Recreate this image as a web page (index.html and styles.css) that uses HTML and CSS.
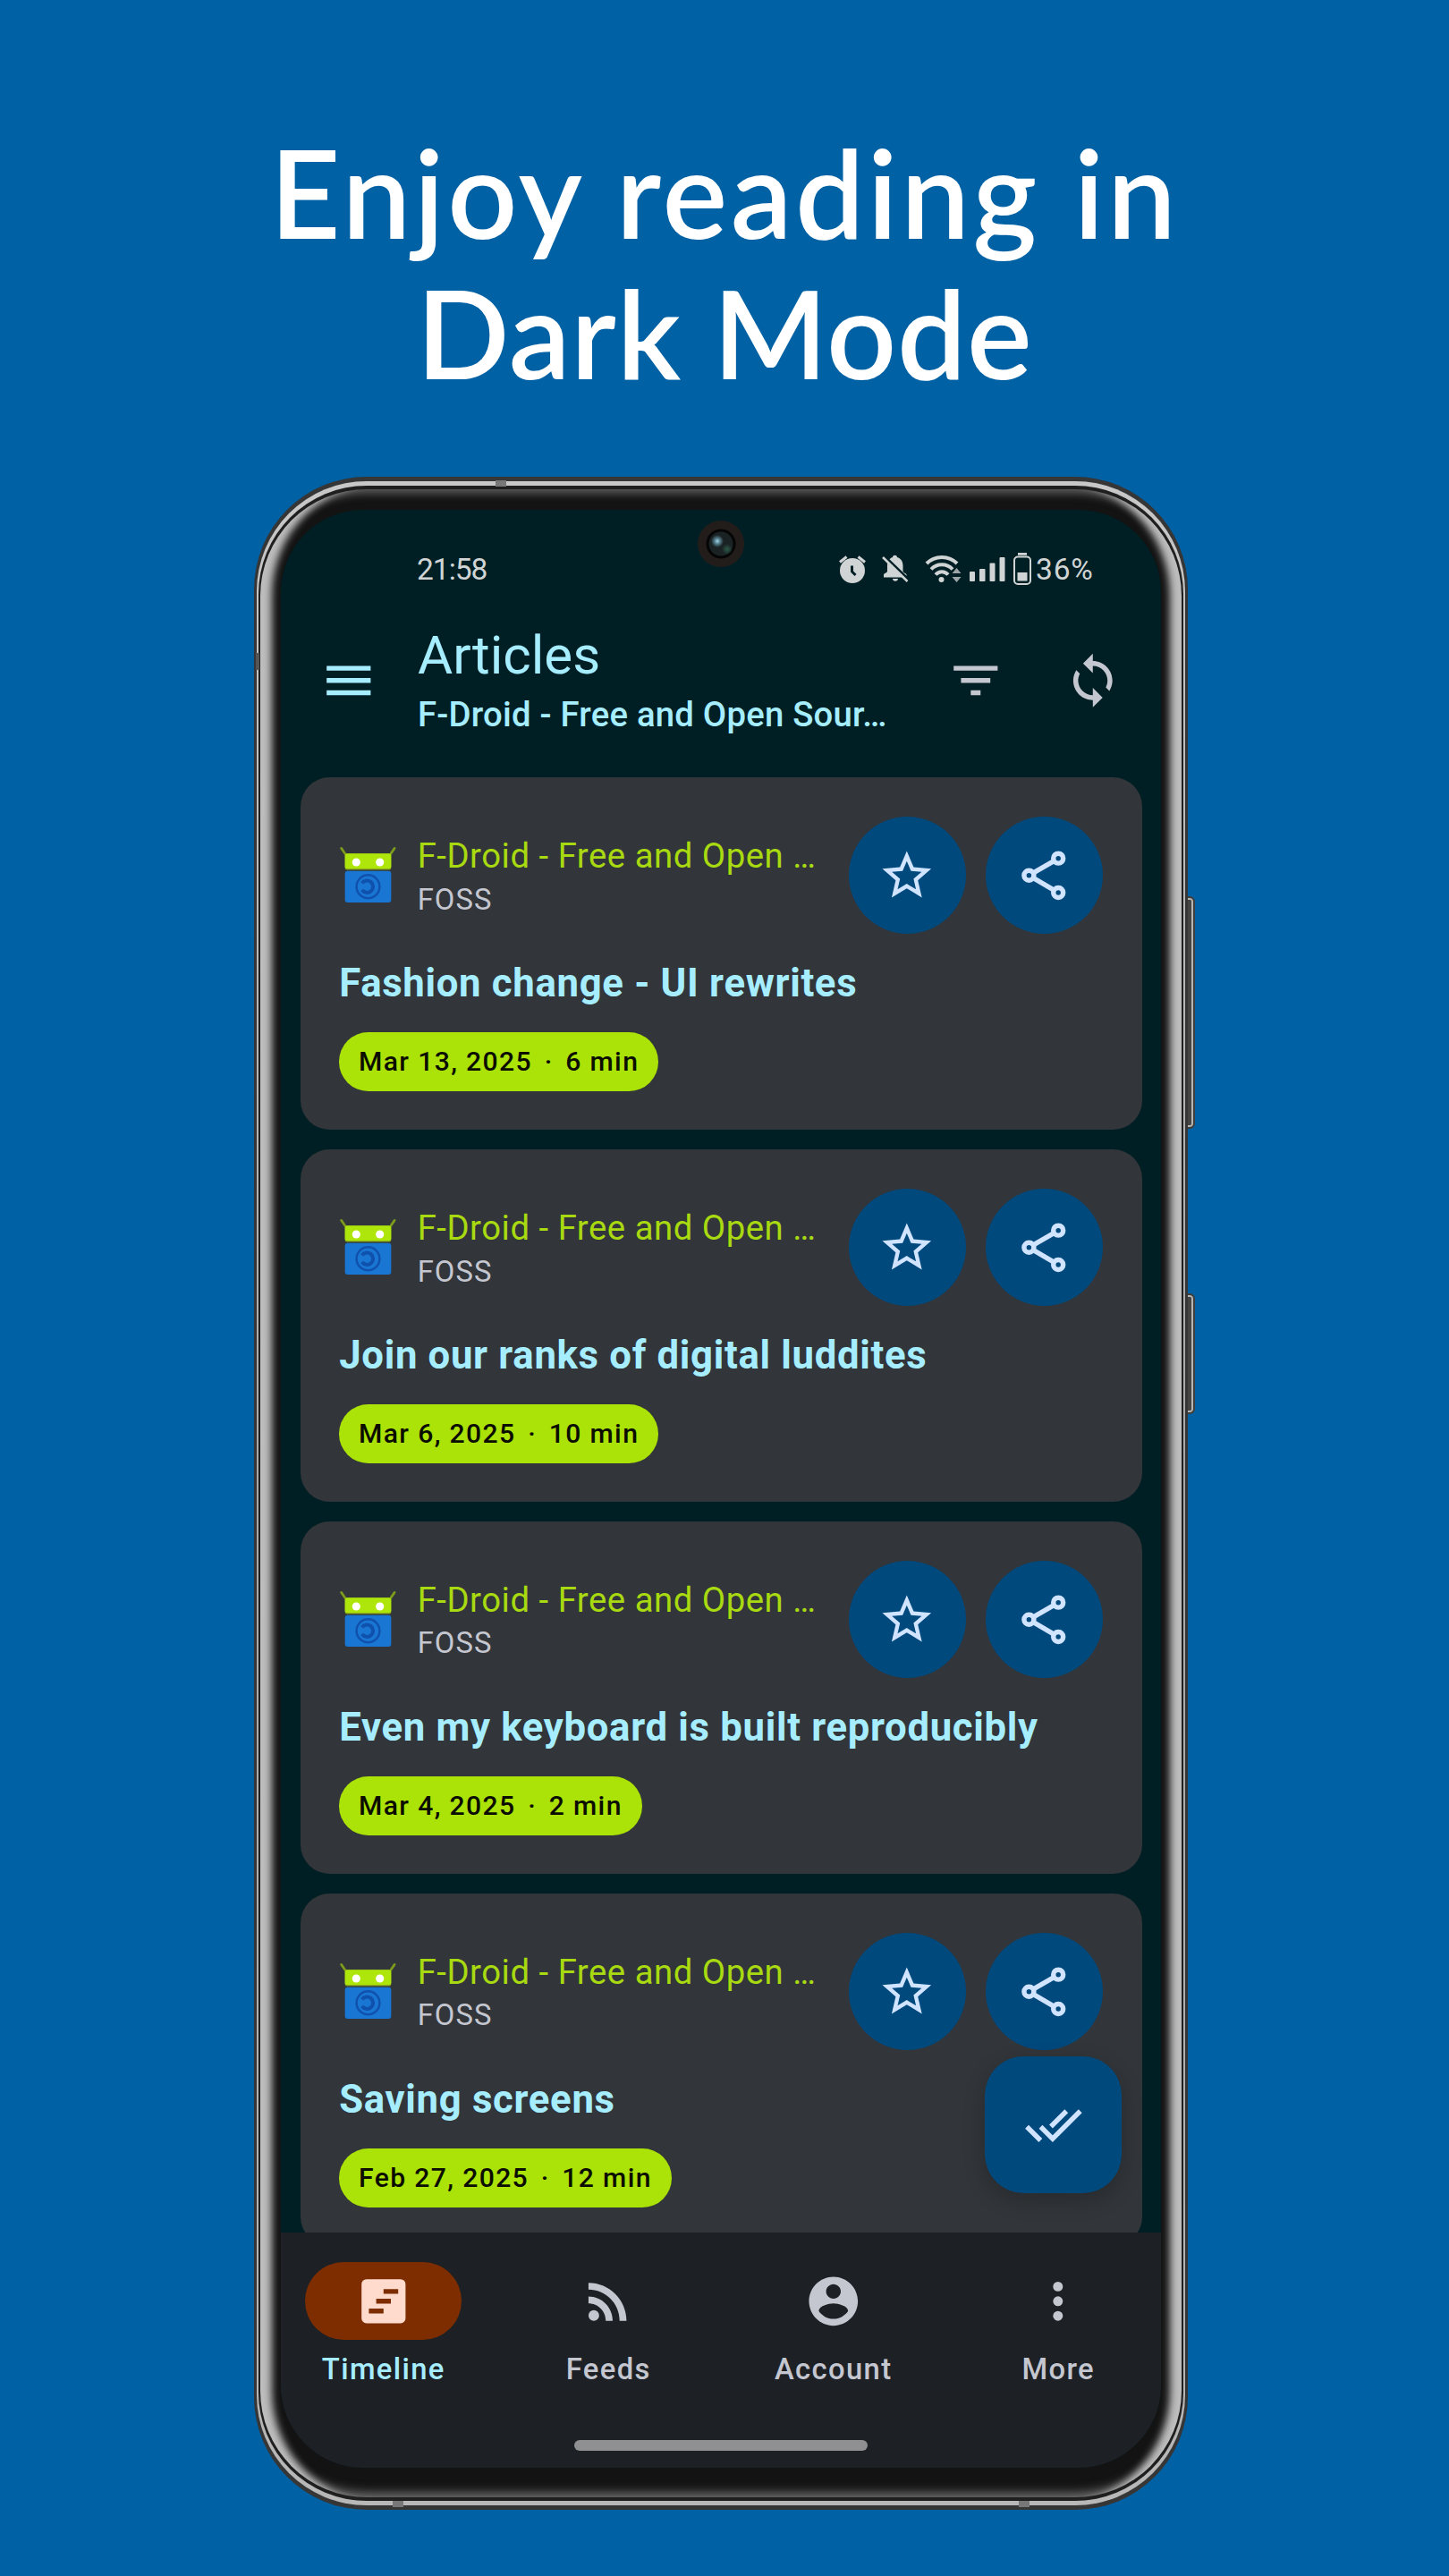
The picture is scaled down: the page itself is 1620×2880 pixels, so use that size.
FILE: index.html
```html
<!DOCTYPE html>
<html lang="en">
<head>
<meta charset="utf-8">
<title>Dark Mode</title>
<link rel="stylesheet" href="styles.css">
</head>
<body>
<svg width="0" height="0" class="defs">
  <symbol id="star" viewBox="0 0 24 24"><path d="M22 9.24l-7.19-.62L12 2 9.19 8.63 2 9.24l5.46 4.73L5.82 21 12 17.27 18.18 21l-1.63-7.03L22 9.24zM12 15.4l-3.76 2.27 1-4.28-3.32-2.88 4.38-.38L12 6.1l1.71 4.04 4.38.38-3.32 2.88 1 4.28L12 15.4z"/></symbol>
  <symbol id="share" viewBox="0 0 24 24"><g fill="none" stroke="currentColor" stroke-width="2"><circle cx="18" cy="5" r="2"/><circle cx="6" cy="12" r="2"/><circle cx="18" cy="19" r="2"/><path d="M7.8 10.95 16.2 6.05M7.8 13.05l8.4 4.9"/></g></symbol>
  <symbol id="fdroid" viewBox="0 0 24 24">
    <path d="M.6.7 2.5 3.4M22.700.7 20.800 3.400" stroke="#7d9b1c" stroke-width="1" stroke-linecap="round" fill="none"/>
    <rect x="2.100" y="2.900" width="19.200" height="6.800" rx="1" fill="#7d9b1c"/>
    <rect x="2.100" y="2.900" width="19.200" height="6.300" rx="1" fill="#aee60c"/>
    <circle cx="6.800" cy="6.500" r="1.700" fill="#fff"/><circle cx="16.600" cy="6.500" r="1.700" fill="#fff"/>
    <rect x="2.100" y="10.100" width="19.200" height="13.100" rx="1.100" fill="#1976d2"/>
    <circle cx="11.700" cy="16.600" r="4.800" fill="none" stroke="#0f51ad" stroke-width=".9"/>
    <path d="M9.200 15.200a2.500 2.500 0 1 1 0 2.800" fill="none" stroke="#0f51ad" stroke-width="1.500"/>
  </symbol>
</svg>
<main class="poster">
  <h1 class="headline"><span class="line-one">Enjoy reading in</span><span class="line-two">Dark Mode</span></h1>
  <div class="phone">
    <i class="side-key volume"></i><i class="side-key power"></i>
    <div class="rim"><div class="groove"><div class="bezel">
      <div class="screen">
        <i class="camera"></i>
        <div class="status">
          <span class="clock">21:58</span>
          <svg class="status-icons" viewBox="938 615 216 40" width="216" height="40" fill="#d0d4d4">
            <circle cx="953" cy="637" r="14"/><path d="M939 627.500l7.500-6M967 627.500l-7.500-6" stroke="#d0d4d4" stroke-width="3"/><path d="M952.500 631.500v6.500l4 4" stroke="#001f24" stroke-width="3" fill="none"/>
            <path d="M988 644.500v-3c0-1.500 4-2 4-4v-6c0-5 2.500-8.500 6-9.500 0-3 5-3 5 0 4 1 6.500 4.500 6.500 9.500v6c0 2 4 2.500 4 4v3zM998 646h6c0 3.500-6 3.500-6 0z"/><path d="M988.500 620.500 1017 648" stroke="#001f24" stroke-width="3"/><path d="M987 622l27.500 27" stroke="#d0d4d4" stroke-width="2.500"/>
            <g fill="none" stroke="#d0d4d4" stroke-width="4"><path d="M1036 629c9-9.500 25-9.500 34 0"/><path d="M1041 635.500c6.500-7 17.500-7 24 0"/><path d="M1046 641.500c4-4.500 10-4.500 14 0"/></g><circle cx="1052.500" cy="647" r="3"/><path d="M1064.500 640l5-6 5 6zM1064.500 644l5 6 5-6z" opacity=".75"/>
            <rect x="1084" y="638" width="6" height="11" rx="1"/><rect x="1095" y="635" width="6.500" height="14" rx="1"/><rect x="1106.500" y="628.500" width="6" height="20.500" rx="1"/><rect x="1117.500" y="622" width="6" height="27" rx="1"/>
            <rect x="1138" y="617" width="10" height="2.800"/><rect x="1134" y="621.500" width="18" height="30.500" rx="4" fill="none" stroke="#d0d4d4" stroke-width="2"/><rect x="1137.500" y="639" width="11" height="9.500"/>
          </svg>
          <span class="battery-level">36%</span>
        </div>
        <header class="appbar">
          <button class="icon-button menu"><svg class="icon" viewBox="0 0 24 24"><path d="M3 18h18v-2H3v2zm0-5h18v-2H3v2zm0-7v2h18V6H3z"/></svg></button>
          <div class="titles"><h2>Articles</h2><p>F-Droid - Free and Open Sour…</p></div>
          <button class="icon-button"><svg class="icon" viewBox="0 0 24 24"><path d="M10 18h4v-2h-4v2zM3 6v2h18V6H3zm3 7h12v-2H6v2z"/></svg></button>
          <button class="icon-button"><svg class="icon" viewBox="0 0 24 24"><path d="M12 4V1L8 5l4 4V6c3.310 0 6 2.690 6 6 0 1.010-.25 1.970-.7 2.800l1.460 1.460C19.540 15.030 20 13.570 20 12c0-4.420-3.580-8-8-8zm0 14c-3.310 0-6-2.690-6-6 0-1.010.25-1.970.7-2.800L5.240 7.740C4.460 8.970 4 10.430 4 12c0 4.420 3.580 8 8 8v3l4-4-4-4v3z"/></svg></button>
        </header>
        <section class="feed">
          <article class="card">
            <div class="card-head"><svg class="favicon"><use href="#fdroid"/></svg><div class="source"><p class="name">F-Droid - Free and Open …</p><p class="category">FOSS</p></div><button class="round"><svg class="icon"><use href="#star"/></svg></button><button class="round"><svg class="icon"><use href="#share"/></svg></button></div>
            <h3>Fashion change - UI rewrites</h3><span class="chip">Mar 13, 2025 <b>·</b> 6 min</span>
          </article>
          <article class="card">
            <div class="card-head"><svg class="favicon"><use href="#fdroid"/></svg><div class="source"><p class="name">F-Droid - Free and Open …</p><p class="category">FOSS</p></div><button class="round"><svg class="icon"><use href="#star"/></svg></button><button class="round"><svg class="icon"><use href="#share"/></svg></button></div>
            <h3>Join our ranks of digital luddites</h3><span class="chip">Mar 6, 2025 <b>·</b> 10 min</span>
          </article>
          <article class="card">
            <div class="card-head"><svg class="favicon"><use href="#fdroid"/></svg><div class="source"><p class="name">F-Droid - Free and Open …</p><p class="category">FOSS</p></div><button class="round"><svg class="icon"><use href="#star"/></svg></button><button class="round"><svg class="icon"><use href="#share"/></svg></button></div>
            <h3>Even my keyboard is built reproducibly</h3><span class="chip">Mar 4, 2025 <b>·</b> 2 min</span>
          </article>
          <article class="card">
            <div class="card-head"><svg class="favicon"><use href="#fdroid"/></svg><div class="source"><p class="name">F-Droid - Free and Open …</p><p class="category">FOSS</p></div><button class="round"><svg class="icon"><use href="#star"/></svg></button><button class="round"><svg class="icon"><use href="#share"/></svg></button></div>
            <h3>Saving screens</h3><span class="chip">Feb 27, 2025 <b>·</b> 12 min</span>
          </article>
          <button class="fab"><svg class="icon" viewBox="0 0 24 24"><path d="M18 7l-1.410-1.410-6.340 6.340 1.410 1.410L18 7zm4.240-1.410L11.660 16.170 7.480 12l-1.410 1.410L11.660 19l12-12-1.420-1.410zM.41 13.410L6 19l1.410-1.410L1.830 12 .41 13.410z"/></svg></button>
        </section>
        <nav class="nav">
          <div class="tabs">
            <a class="tab active"><span class="tab-icon"><svg class="icon" viewBox="0 0 24 24"><path fill-rule="evenodd" d="M5 3h14a2 2 0 0 1 2 2v14a2 2 0 0 1-2 2H5a2 2 0 0 1-2-2V5a2 2 0 0 1 2-2zm7 4v2h6V7zm-3 4v2h6v-2zm-3 4v2h6v-2z"/></svg></span>Timeline</a>
            <a class="tab"><span class="tab-icon"><svg class="icon" viewBox="0 0 24 24"><circle cx="6.180" cy="17.820" r="2.180"/><path d="M4 4.440v2.830c7.030 0 12.730 5.700 12.730 12.730h2.830c0-8.590-6.970-15.560-15.560-15.560zm0 5.660v2.830c3.900 0 7.070 3.170 7.070 7.070h2.830c0-5.470-4.430-9.900-9.900-9.900z"/></svg></span>Feeds</a>
            <a class="tab"><span class="tab-icon"><svg class="icon" viewBox="0 0 24 24"><path d="M12 2C6.480 2 2 6.480 2 12s4.480 10 10 10 10-4.480 10-10S17.520 2 12 2zm0 3c1.660 0 3 1.340 3 3s-1.340 3-3 3-3-1.340-3-3 1.340-3 3-3zm0 14.200c-2.500 0-4.710-1.280-6-3.220.03-1.990 4-3.080 6-3.080 1.990 0 5.970 1.090 6 3.080-1.290 1.940-3.500 3.220-6 3.220z"/></svg></span>Account</a>
            <a class="tab"><span class="tab-icon"><svg class="icon" viewBox="0 0 24 24"><circle cx="12" cy="6" r="2"/><circle cx="12" cy="12" r="2"/><circle cx="12" cy="18" r="2"/></svg></span>More</a>
          </div>
          <i class="gesture"></i>
        </nav>
      </div>
    </div></div></div>
    <i class="band b1"></i><i class="band b2"></i><i class="band b3"></i><i class="band b4"></i>
  </div>
</main>
</body>
</html>
```
FILE: styles.css
```css
* { box-sizing: border-box; margin: 0; padding: 0; }
body { background: #0061a4; font-family: Roboto, "Liberation Sans", sans-serif; }
button { border: 0; background: none; color: inherit; font: inherit; }
i { display: block; }
.defs { position: absolute; }
.poster { width: 1620px; height: 2880px; overflow: hidden; padding-top: 136px; }

.headline { height: 397px; color: #fff; font: 600 137px/157px Lato, sans-serif; text-align: center; }
.headline span { display: block; white-space: nowrap; }
.line-one { letter-spacing: 3.500px; }
.line-two { letter-spacing: .8px; }

.phone { position: relative; width: 1044px; height: 2273px; margin-left: 284px; padding: 5px 3px; border-radius: 126px; background: #363636; }
.rim { height: 100%; padding: 5px 2px; border-radius: 123px; background: linear-gradient(#c8c8c8, #a8a8a8 50%, #b8b8b8); }
.groove { height: 100%; padding: 4px 2px; border-radius: 121px; background: #1f1f1f; }
.bezel { height: 100%; padding: 23px 23px 33px; border-radius: 119px; background: #131313; box-shadow: inset 23px 0 9px -10px #bdbdbd, inset -23px 0 9px -10px #bdbdbd, inset 0 15px 10px -10px #5a5a5a, inset 0 -15px 12px -10px #707070; }
.side-key { position: absolute; left: 1044px; width: 8px; border: 2px solid #403e3b; border-left: 0; border-radius: 0 6px 6px 0; background: #454442; box-shadow: inset -2px 0 #b5b5b3, inset 0 2px #b5b5b3, inset 0 -2px #b5b5b3; }
.volume { top: 469px; height: 260px; }
.power { top: 913px; height: 135px; }
.band { position: absolute; background: #777; }
.b1 { left: 270px; top: 4px; width: 12px; height: 7px; }
.b2 { left: 155px; bottom: 3px; width: 12px; height: 7px; }
.b3 { right: 177px; bottom: 3px; width: 12px; height: 7px; }
.b4 { left: 2px; top: 197px; width: 4px; height: 19px; background: #555; }

.screen { position: relative; display: flex; flex-direction: column; width: 984px; height: 2189px; overflow: hidden; border-radius: 92px; background: #001f24; }
.camera { position: absolute; left: 466px; top: 12px; width: 52px; height: 52px; border-radius: 50%; background: radial-gradient(circle at 22px 23px, #a5d5e8 0, #55808f 3px, transparent 7px), radial-gradient(circle at 33px 32px, #2c5a48 0, transparent 6px), radial-gradient(circle at 50% 50%, #1a2224 0 13px, #050505 14px 16px, #221d1b 17px); }

.status { display: flex; align-items: center; height: 102.500px; padding: 31px 0 0 152px; color: #d0d4d4; font-size: 33.500px; line-height: 40px; }
.status-icons { margin: -2px 0 0 auto; }
.clock { letter-spacing: -1px; }
.battery-level { width: 144px; padding-left: 4px; letter-spacing: .8px; }

.appbar { display: flex; align-items: center; height: 175px; padding: 1px 10.900px 0 10px; color: #c4c6d0; }
.icon { display: block; width: 65.600px; height: 65.600px; fill: currentColor; }
.icon-button { display: grid; place-items: center; width: 131.200px; height: 131.200px; }
.menu, .titles { color: #a6eeff; }
.titles { flex: 1; padding: 1px 0 0 11.800px; white-space: nowrap; }
.titles h2 { font-size: 60.100px; font-weight: 400; line-height: 76.500px; }
.titles p { font-size: 38.300px; font-weight: 500; line-height: 54.700px; letter-spacing: .22px; }

.feed { position: relative; display: flex; flex-direction: column; gap: 22px; height: 1648.200px; padding: 21.900px 21.500px 0; overflow: hidden; }
.card { flex: none; display: flex; flex-direction: column; align-items: flex-start; gap: 22px; height: 393.900px; padding: 43.700px; border-radius: 32.800px; background: #323539; }
.card-head { display: flex; align-items: center; gap: 21.870px; width: 100%; height: 131.200px; }
.favicon { width: 65.600px; height: 65.600px; padding-left: 1px; }
.source { flex: 1; width: 0; padding-top: 1px; white-space: nowrap; }
.name { color: #a8d911; font-size: 38.300px; line-height: 54.700px; letter-spacing: .52px; }
.category { color: #c4c6d0; font-size: 32.800px; line-height: 43.700px; letter-spacing: 1.100px; }
.round { display: grid; place-items: center; width: 131.200px; height: 131.200px; border-radius: 50%; background: #00497d; color: #d1e4ff; }
.card h3 { color: #a6eeff; font-size: 43.700px; font-weight: 700; line-height: 66px; letter-spacing: .69px; white-space: nowrap; }
.chip { height: 65.600px; padding: 0 21.870px; border-radius: 32.800px; background: #abe207; color: #0a0d00; font-size: 30.100px; font-weight: 500; line-height: 65.600px; letter-spacing: 1.370px; white-space: nowrap; }
.chip b { margin: 0 4.800px; font-weight: 500; }
.fab { position: absolute; right: 43.700px; bottom: 43.700px; display: grid; place-items: center; width: 153px; height: 153px; border-radius: 43.700px; background: #00497d; color: #d1e4ff; box-shadow: 0 8px 24px rgba(0, 0, 0, .2); }

.nav { flex: 1; background: #1d2024; }
.tabs { display: grid; grid-template-columns: repeat(4, 1fr); gap: 21.870px; height: 218.600px; padding-top: 33px; }
.tab { display: flex; flex-direction: column; align-items: center; gap: 12px; color: #c4c6d0; font-size: 32.800px; font-weight: 500; line-height: 43.700px; letter-spacing: 1.370px; }
.tab-icon { display: grid; place-items: center; width: 175px; height: 87.500px; border-radius: 44px; }
.active { color: #a6eeff; }
.active .tab-icon { background: #7d2d00; color: #ffdbcd; }
.gesture { width: 328px; height: 12px; margin: 14px auto 0; border-radius: 6px; background: #8e9092; }
```
